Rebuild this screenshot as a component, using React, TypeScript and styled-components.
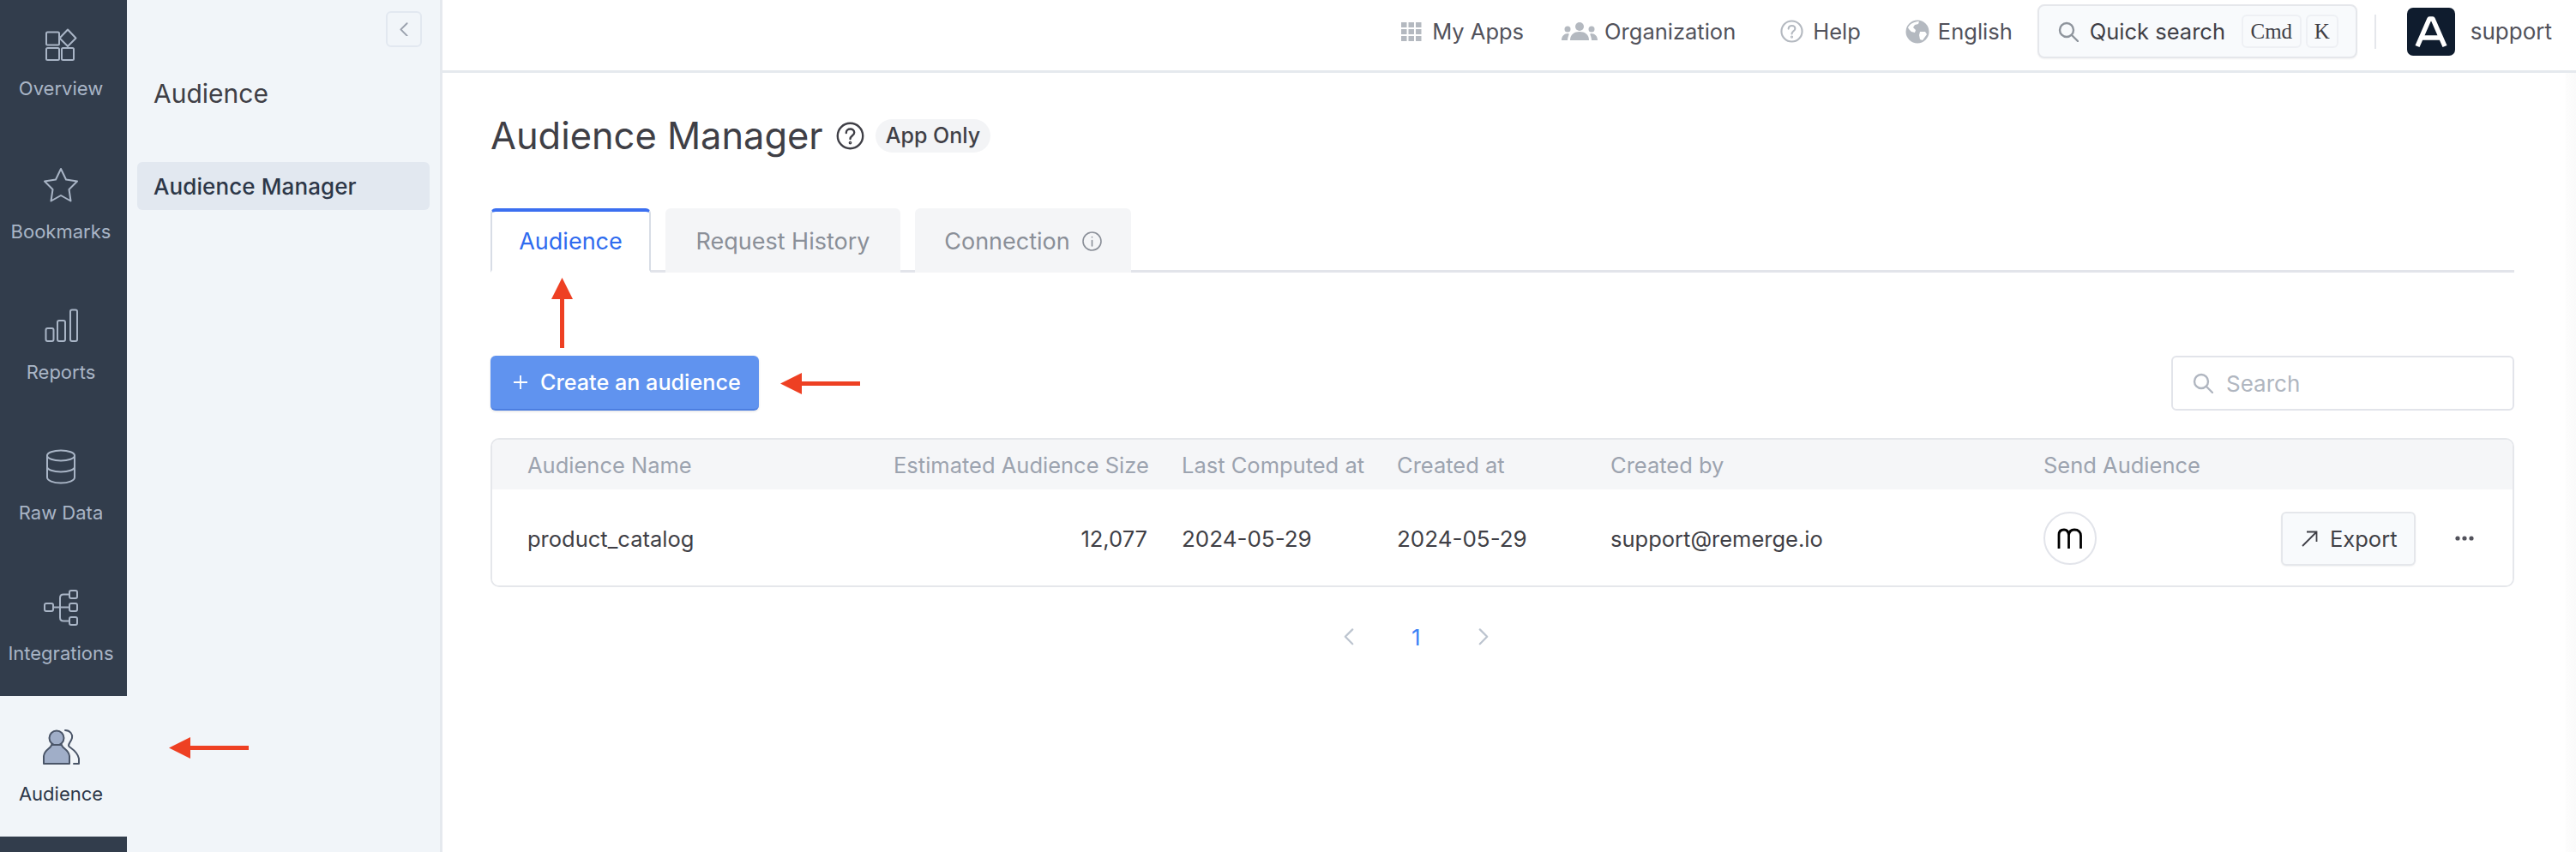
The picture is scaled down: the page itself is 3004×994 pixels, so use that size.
import React from 'react';
import styled, { createGlobalStyle } from 'styled-components';

const Global = createGlobalStyle`
  html, body { margin: 0; padding: 0; background: #fff; }
  body { font-family: Inter, "Noto Sans", sans-serif; color: #3f3f46; }
  * { box-sizing: border-box; }
`;

const Page = styled.div`
  width: 3004px;
  height: 994px;
  display: flex;
  overflow: hidden;
  background: #fff;
`;

const Rail = styled.nav`
  width: 148px;
  flex: none;
  background: #323d4c;
  display: flex;
  flex-direction: column;
`;

const RailItem = styled.a<{ $active?: boolean; $first?: boolean }>`
  height: ${p => (p.$first ? 156 : 164)}px;
  padding: ${p => (p.$first ? 32 : 38)}px 6px 0 0;
  display: flex;
  flex-direction: column;
  align-items: center;
  gap: ${p => (p.$first ? 13 : 18)}px;
  font-size: 22px;
  line-height: 28px;
  color: ${p => (p.$active ? '#2d3748' : '#a9b5c6')};
  background: ${p => (p.$active ? '#f1f5f9' : 'transparent')};
  svg { display: block; width: 44px; height: 44px; flex: none; }
`;

const SubNav = styled.aside`
  width: 368px;
  flex: none;
  background: #f1f5f9;
  border-right: 3px solid #e5e9ee;
  padding: 13px 12px 0;
  display: flex;
  flex-direction: column;
`;

const Collapse = styled.button`
  align-self: flex-end;
  width: 42px;
  height: 42px;
  margin-right: 9px;
  padding: 0;
  border: 2px solid #e2e8f0;
  border-radius: 6px;
  background: #f1f5f9;
  display: flex;
  align-items: center;
  justify-content: center;
  color: #9aa1ad;
`;

const SubTitle = styled.h2`
  margin: 34px 0 0 19px;
  font-size: 30px;
  line-height: 40px;
  font-weight: 400;
  color: #3f3f46;
`;

const SubItem = styled.a`
  margin-top: 60px;
  height: 56px;
  padding-left: 19px;
  display: flex;
  align-items: center;
  border-radius: 6px;
  background: #e2e8f0;
  font-size: 26px;
  font-weight: 500;
  letter-spacing: 0.1px;
  color: #2d3748;
`;

const Body = styled.div`
  flex: 1;
  min-width: 0;
  display: flex;
  flex-direction: column;
`;

const TopBar = styled.header`
  height: 85px;
  flex: none;
  border-bottom: 3px solid #e5e9ee;
  padding: 5px 28px 0 0;
  display: flex;
  justify-content: flex-end;
  align-items: flex-start;
`;

const NavLink = styled.a<{ $gap: number; $after: number }>`
  height: 63px;
  display: flex;
  align-items: center;
  gap: ${p => p.$gap}px;
  margin-right: ${p => p.$after}px;
  font-size: 25.5px;
  color: #52525b;
  white-space: nowrap;
  svg { flex: none; display: block; }
`;

const QuickSearch = styled.div`
  width: 373px;
  height: 63px;
  flex: none;
  padding: 0 0 0 22px;
  display: flex;
  align-items: center;
  background: #f8fafc;
  border: 2px solid #e5e7eb;
  border-radius: 8px;
  box-shadow: 0 1px 2px rgba(0, 0, 0, 0.05);
  font-size: 25.5px;
  color: #3f3f46;
  white-space: nowrap;
  svg { flex: none; }
`;

const QuickLabel = styled.span`
  margin-left: 13px;
  width: 177px;
  flex: none;
`;

const Key = styled.kbd<{ $w: number }>`
  width: ${p => p.$w}px;
  height: 39px;
  flex: none;
  margin-right: 5px;
  display: flex;
  align-items: center;
  justify-content: center;
  border: 2px solid #eef0f4;
  border-radius: 6px;
  font-family: "Liberation Serif", serif;
  font-size: 25px;
  color: #3f3f46;
`;

const Divider = styled.span`
  width: 2px;
  height: 40px;
  margin: 12px 36px 0 20px;
  background: #e5e7eb;
`;

const Brand = styled.span`
  width: 56px;
  height: 56px;
  margin-top: 4px;
  border-radius: 7px;
  background: #0f1c2e;
  display: flex;
  align-items: center;
  justify-content: center;
`;

const UserName = styled.span`
  height: 63px;
  margin-left: 18px;
  display: flex;
  align-items: center;
  font-size: 26px;
  color: #52525b;
`;

const Workspace = styled.div`
  flex: 1;
  display: flex;
  min-height: 0;
`;

const Main = styled.main`
  flex: 1;
  min-width: 0;
  padding: 53px 60px 0 56px;
  display: flex;
  flex-direction: column;
`;

const ScrollEdge = styled.div`
  width: 12px;
  flex: none;
  background: linear-gradient(to right, #fdfdfd, #fafafa);
`;

const TitleRow = styled.div`
  height: 40px;
  display: flex;
  align-items: center;
`;

const Title = styled.h1`
  margin: 0;
  font-size: 43.4px;
  line-height: 40px;
  font-weight: 400;
  color: #3f3f46;
  white-space: nowrap;
`;

const HelpMark = styled.span`
  margin-left: 15px;
  display: flex;
  color: #3f3f46;
`;

const Badge = styled.span`
  margin-left: 13px;
  height: 39px;
  padding: 0 12px;
  display: flex;
  align-items: center;
  border-radius: 20px;
  background: #f3f4f6;
  font-size: 25px;
  font-weight: 500;
  color: #3f3f46;
`;

const Tabs = styled.div`
  margin-top: 65px;
  height: 75px;
  display: flex;
  gap: 17px;
  border-bottom: 3px solid #e2e4ea;
`;

const Tab = styled.a<{ $active?: boolean; $w: number }>`
  width: ${p => p.$w}px;
  height: 75px;
  flex: none;
  display: flex;
  align-items: center;
  justify-content: center;
  gap: 14px;
  border-radius: 6px 6px 0 0;
  font-size: 27px;
  white-space: nowrap;
  color: ${p => (p.$active ? '#2f6bef' : '#8a8f98')};
  background: ${p => (p.$active ? '#fff' : '#f4f5f7')};
  border: 2px solid ${p => (p.$active ? '#d8dde6' : '#f4f5f7')};
  border-top: ${p => (p.$active ? '4px solid #3b6ff0' : '2px solid #f4f5f7')};
  border-bottom: ${p => (p.$active ? '3px solid #fff' : '0')};
`;

const Toolbar = styled.div`
  margin-top: 97px;
  height: 64px;
  display: flex;
  justify-content: space-between;
`;

const PrimaryButton = styled.button`
  width: 313px;
  height: 64px;
  padding: 0 0 0 27px;
  display: flex;
  align-items: center;
  gap: 15px;
  border: 0;
  border-bottom: 2px solid #4c7ee0;
  border-radius: 6px;
  background: #6093ef;
  box-shadow: 0 1px 3px rgba(0, 0, 0, 0.12);
  color: #fff;
  font-family: inherit;
  font-size: 25.2px;
  font-weight: 500;
  white-space: nowrap;
`;

const SearchBox = styled.div`
  width: 400px;
  height: 64px;
  padding-left: 23px;
  display: flex;
  align-items: center;
  gap: 15px;
  border: 2px solid #e2e4ea;
  border-radius: 6px;
  font-size: 26px;
  color: #b0b6c0;
  svg { flex: none; }
`;

const Table = styled.div`
  margin-top: 32px;
  height: 174px;
  border: 2px solid #e5e7eb;
  border-radius: 10px;
  overflow: hidden;
`;

const TableRow = styled.div<{ $head?: boolean }>`
  height: ${p => (p.$head ? 58 : 114)}px;
  padding-left: 41px;
  display: grid;
  grid-template-columns: 387px 296px 211px 209px 465px 237px auto;
  column-gap: 40px;
  align-items: center;
  font-size: 25.5px;
  white-space: nowrap;
  color: ${p => (p.$head ? '#9ca3af' : '#3f3f46')};
  background: ${p => (p.$head ? '#f5f6f8' : '#fff')};
`;

const NumberCell = styled.div`
  text-align: right;
`;

const DateCell = styled.div`
  font-size: 26px;
`;

const Avatar = styled.span`
  width: 62px;
  height: 62px;
  display: flex;
  align-items: center;
  justify-content: center;
  border: 2px solid #e2e4ea;
  border-radius: 50%;
`;

const Actions = styled.div`
  display: flex;
  align-items: center;
  gap: 46px;
`;

const ExportButton = styled.button`
  width: 157px;
  height: 63px;
  padding: 0 0 0 22px;
  display: flex;
  align-items: center;
  gap: 14px;
  border: 2px solid #e5e7eb;
  border-radius: 6px;
  background: #f8fafc;
  box-shadow: 0 1px 2px rgba(0, 0, 0, 0.05);
  font-family: inherit;
  font-size: 25.5px;
  color: #3f3f46;
`;

const Pager = styled.div`
  margin-top: 38px;
  margin-left: 994px;
  height: 40px;
  display: flex;
  align-items: center;
  gap: 66px;
  font-size: 26px;
  color: #3b82f6;
`;

const Annotation = styled.svg`
  position: absolute;
`;

const Frame = styled.div`
  position: relative;
`;

const stroke = { fill: 'none', stroke: '#a9b5c6', strokeWidth: 2, strokeLinecap: 'round' as const, strokeLinejoin: 'round' as const };

const OverviewIcon = () => (
  <svg viewBox="0 0 44 44" {...stroke}>
    <rect x="5" y="5.5" width="15" height="15" rx="1.5" />
    <path d="M30 2.5 L39.5 12.5 L30 22 L20.5 12.5 Z" />
    <rect x="5" y="24" width="15" height="14" rx="1.5" />
    <rect x="23" y="24" width="14" height="14" rx="1.5" />
  </svg>
);
const StarIcon = () => (
  <svg viewBox="0 0 44 44" {...stroke}>
    <path d="M22 3 L28 15.5 L41 17.5 L31.5 27 L33.5 40.5 L22 34 L10.5 40.5 L12.5 27 L3 17.5 L16 15.5 Z" />
  </svg>
);
const ReportsIcon = () => (
  <svg viewBox="0 0 44 44" {...stroke}>
    <rect x="4.5" y="25" width="9" height="15" rx="2" />
    <rect x="18" y="16" width="9" height="24" rx="2" />
    <rect x="33" y="3.5" width="8" height="36.5" rx="2" />
  </svg>
);
const DatabaseIcon = () => (
  <svg viewBox="0 0 44 44" {...stroke}>
    <ellipse cx="22" cy="9.5" rx="16" ry="6" />
    <path d="M6 9.5 V35 C6 38.5 13 41.5 22 41.5 C31 41.5 38 38.5 38 35 V9.5" />
    <path d="M6 22.5 C6 26 13 28.5 22 28.5 C31 28.5 38 26 38 22.5" />
  </svg>
);
const IntegrationsIcon = () => (
  <svg viewBox="0 0 44 44" {...stroke}>
    <rect x="3" y="18" width="10" height="9" rx="2" />
    <rect x="32" y="3" width="9" height="9" rx="2" />
    <rect x="32" y="18" width="9" height="9" rx="2" />
    <rect x="32" y="34" width="9" height="9" rx="2" />
    <path d="M13 22.5 H32 M32 7.5 H25 Q21 7.5 21 11.5 V34.5 Q21 38.5 25 38.5 H32" />
  </svg>
);
const AudienceIcon = () => (
  <svg viewBox="0 0 44 44" fill="#a0aec8" stroke="#4a5568" strokeWidth="2" strokeLinejoin="round" strokeLinecap="round">
    <circle cx="17" cy="11" r="8.5" />
    <path d="M11 19 C11 23 3 24 2 32 V41 H32 V32 C31 24 23 23 23 19 Z" />
    <path fill="none" d="M27 2 C33 2 36 7 35 11 C34 15 31 17 31 20 C31 22 41 25 43 35 V41 H37" />
  </svg>
);

const GridIcon = () => (
  <svg width="24" height="22" viewBox="0 0 24 22" fill="#b4b9c0">
    {[0, 8.5, 17].map(x => [0, 8, 16].map(y => <rect key={`${x}-${y}`} x={x} y={y} width="6.5" height="6" />))}
  </svg>
);
const PeopleIcon = () => (
  <svg width="42" height="22" viewBox="0 0 42 22" fill="#b4b9c0">
    <circle cx="21" cy="5" r="5" />
    <path d="M10 21 C10 14 15 11 21 11 C27 11 32 14 32 21 Z" />
    <circle cx="7" cy="8" r="3.5" />
    <path d="M0 21 C0 16 3 13 8 13 C8.5 13 9 14 8 16 C7.5 18 7 19 7 21 Z" />
    <circle cx="35" cy="8" r="3.5" />
    <path d="M42 21 C42 16 39 13 34 13 C33.5 13 33 14 34 16 C34.5 18 35 19 35 21 Z" />
  </svg>
);
const HelpIcon = ({ size, color, sw }: { size: number; color: string; sw: number }) => (
  <svg width={size} height={size} viewBox="0 0 28 28" fill="none" stroke={color} strokeWidth={sw} strokeLinecap="round">
    <circle cx="14" cy="14" r="12.5" />
    <path d="M10 11 C10 8.5 12 7.2 14 7.2 C16.3 7.2 18 8.7 18 10.8 C18 13.6 14 14 14 17" />
    <circle cx="14" cy="20.8" r="0.6" />
  </svg>
);
const GlobeIcon = () => (
  <svg width="28" height="28" viewBox="0 0 28 28">
    <circle cx="14" cy="14" r="13.5" fill="#b4b9c0" />
    <path fill="#fff" d="M3 9 C6 4 11 2 16 2 L15 5 L11 6 L9 9 L12 12 L11 15 L7 14 L4 11 Z M17 14 L23 14 L25 17 L20 24 L17 23 L16 18 Z" />
  </svg>
);
const SearchGlyph = ({ color }: { color: string }) => (
  <svg width="24" height="24" viewBox="0 0 24 24" fill="none" stroke={color} strokeWidth="2.4" strokeLinecap="round">
    <circle cx="10" cy="10" r="8" />
    <path d="M16 16 L23 23" />
  </svg>
);
const Chevron = ({ dir, color, size }: { dir: 'l' | 'r'; color: string; size: number }) => (
  <svg width={size} height={size * 1.4} viewBox="0 0 10 14" fill="none" stroke={color} strokeWidth="1.6" strokeLinecap="round" strokeLinejoin="round">
    <path d={dir === 'l' ? 'M8 1 L2 7 L8 13' : 'M2 1 L8 7 L2 13'} />
  </svg>
);
const Arrow = ({ w, h, vertical }: { w: number; h: number; vertical?: boolean }) =>
  vertical ? (
    <path d={`M${w / 2 - 2.5} 25 H0 L${w / 2} 0 L${w} 25 H${w / 2 + 2.5} V${h} H${w / 2 - 2.5} Z`} fill="#ee4023" />
  ) : (
    <path d={`M0 ${h / 2} L25 0 V${h / 2 - 2.5} H${w} V${h / 2 + 2.5} H25 V${h} Z`} fill="#ee4023" />
  );

export default function App() {
  return (
    <Frame>
      <Global />
      <Page>
        <Rail>
          <RailItem $first><OverviewIcon />Overview</RailItem>
          <RailItem><StarIcon />Bookmarks</RailItem>
          <RailItem><ReportsIcon />Reports</RailItem>
          <RailItem><DatabaseIcon />Raw Data</RailItem>
          <RailItem><IntegrationsIcon />Integrations</RailItem>
          <RailItem $active><AudienceIcon />Audience</RailItem>
        </Rail>
        <SubNav>
          <Collapse><Chevron dir="l" color="#9aa1ad" size={12} /></Collapse>
          <SubTitle>Audience</SubTitle>
          <SubItem>Audience Manager</SubItem>
        </SubNav>
        <Body>
          <TopBar>
            <NavLink $gap={12} $after={44}><GridIcon />My Apps</NavLink>
            <NavLink $gap={8} $after={52}><PeopleIcon />Organization</NavLink>
            <NavLink $gap={11} $after={52}><HelpIcon size={27} color="#b4b9c0" sw={2.2} />Help</NavLink>
            <NavLink $gap={10} $after={29}><GlobeIcon />English</NavLink>
            <QuickSearch>
              <SearchGlyph color="#8e949c" />
              <QuickLabel>Quick search</QuickLabel>
              <Key $w={70}>Cmd</Key>
              <Key $w={38}>K</Key>
            </QuickSearch>
            <Divider />
            <Brand>
              <svg width="38" height="38" viewBox="0 0 38 38" fill="none" stroke="#fff" strokeWidth="5.5" strokeLinejoin="round">
                <path d="M3 36 L17 4 H21 L35 36 M8 26 H30" />
              </svg>
            </Brand>
            <UserName>support</UserName>
          </TopBar>
          <Workspace>
            <Main>
              <TitleRow>
                <Title>Audience Manager</Title>
                <HelpMark><HelpIcon size={33} color="#3f3f46" sw={2} /></HelpMark>
                <Badge>App Only</Badge>
              </TitleRow>
              <Tabs>
                <Tab $active $w={187}>Audience</Tab>
                <Tab $w={274}>Request History</Tab>
                <Tab $w={252}>
                  Connection
                  <svg width="23" height="23" viewBox="0 0 23 23" fill="none" stroke="#8a8f98" strokeWidth="1.6" strokeLinecap="round">
                    <circle cx="11.5" cy="11.5" r="10.5" />
                    <path d="M11.5 10.5 V17 M11.5 6.5 V6.7" />
                  </svg>
                </Tab>
              </Tabs>
              <Toolbar>
                <PrimaryButton>
                  <svg width="16" height="16" viewBox="0 0 16 16" stroke="#fff" strokeWidth="1.8">
                    <path d="M8 0 V16 M0 8 H16" />
                  </svg>
                  Create an audience
                </PrimaryButton>
                <SearchBox>
                  <SearchGlyph color="#b0b6c0" />
                  Search
                </SearchBox>
              </Toolbar>
              <Table>
                <TableRow $head>
                  <div>Audience Name</div>
                  <NumberCell>Estimated Audience Size</NumberCell>
                  <div>Last Computed at</div>
                  <div>Created at</div>
                  <div>Created by</div>
                  <div>Send Audience</div>
                  <div />
                </TableRow>
                <TableRow>
                  <div>product_catalog</div>
                  <NumberCell>12,077</NumberCell>
                  <DateCell>2024-05-29</DateCell>
                  <DateCell>2024-05-29</DateCell>
                  <div>support@remerge.io</div>
                  <Avatar>
                    <svg width="30" height="24" viewBox="0 0 30 24" fill="none" stroke="#000" strokeWidth="2.8">
                      <path d="M2 24 V8 C2 4 4 2 8 2 C11 2 13 4 13.5 8 V24 M13.5 8 C14 4 16 2 20 2 C25 2 27.5 5 27.5 9 V24" />
                    </svg>
                  </Avatar>
                  <Actions>
                    <ExportButton>
                      <svg width="19" height="19" viewBox="0 0 19 19" fill="none" stroke="#3f3f46" strokeWidth="1.8">
                        <path d="M1 18 L17.5 1.5 M6 1.5 H17.5 V13" />
                      </svg>
                      Export
                    </ExportButton>
                    <svg width="22" height="6" viewBox="0 0 22 6" fill="#52525b">
                      <circle cx="3" cy="3" r="2.6" />
                      <circle cx="11" cy="3" r="2.6" />
                      <circle cx="19" cy="3" r="2.6" />
                    </svg>
                  </Actions>
                </TableRow>
              </Table>
              <Pager>
                <Chevron dir="l" color="#bcc4cf" size={14} />
                <span>1</span>
                <Chevron dir="r" color="#bcc4cf" size={14} />
              </Pager>
            </Main>
            <ScrollEdge />
          </Workspace>
        </Body>
      </Page>
      <Annotation width="25" height="82" style={{ left: 643, top: 324 }}><Arrow w={25} h={82} vertical /></Annotation>
      <Annotation width="93" height="25" style={{ left: 910, top: 435 }}><Arrow w={93} h={25} /></Annotation>
      <Annotation width="93" height="25" style={{ left: 197, top: 860 }}><Arrow w={93} h={25} /></Annotation>
    </Frame>
  );
}
